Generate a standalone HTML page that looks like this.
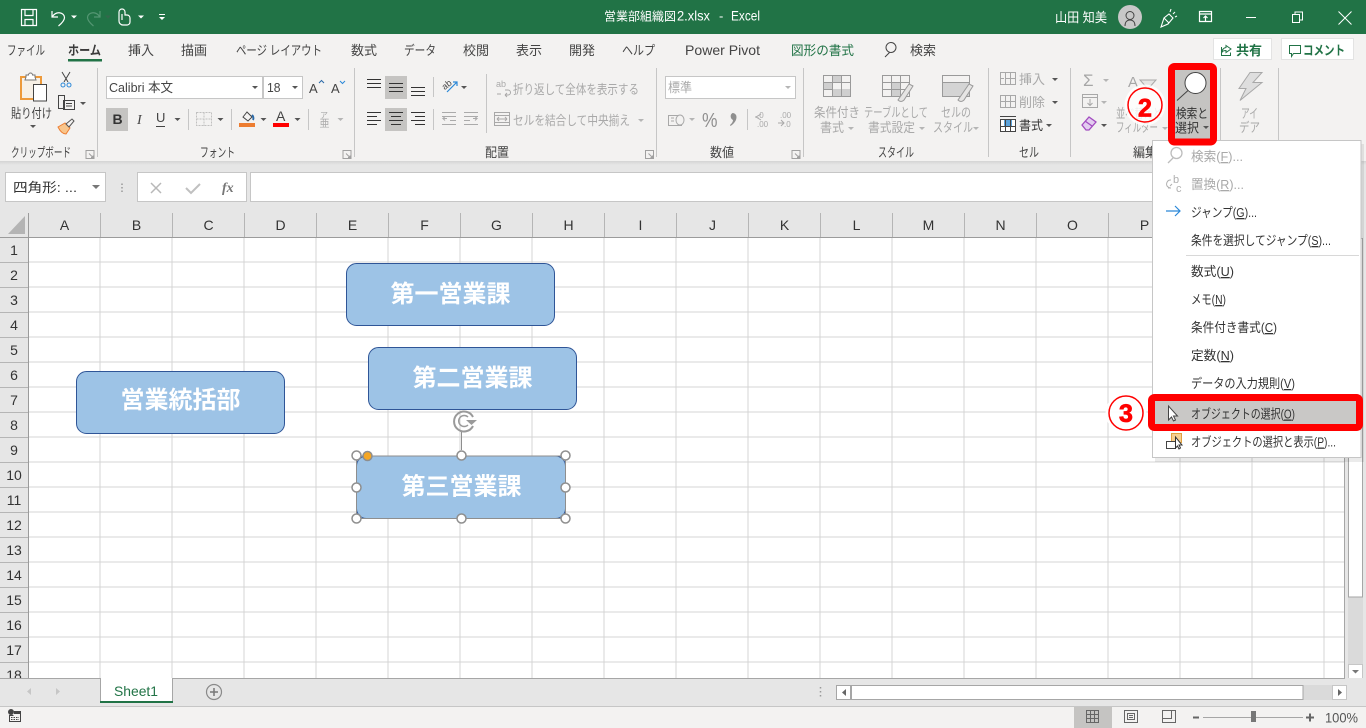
<!DOCTYPE html>
<html lang="ja"><head><meta charset="utf-8"><title>営業部組織図2.xlsx - Excel</title>
<style>
html,body{margin:0;padding:0;width:1366px;height:728px;overflow:hidden;background:#fff}
svg{position:absolute;left:0;top:0;display:block}
text{font-family:"Liberation Sans","Noto Sans CJK JP",sans-serif;font-size:13px;fill:#444}
.d{fill:#a9a9a9}.k{fill:#333}.w{fill:#fff}.g{fill:#217346}.b{font-weight:700}
.h{font-size:14px;fill:#333;text-anchor:middle}
.r{font-size:14px;fill:#333;text-anchor:middle}
.i{fill:none;stroke:#444;stroke-width:1}
.n{fill:none;stroke:#a8a8a8;stroke-width:1}
.s{font-size:24px;font-weight:700;fill:#fff;text-anchor:middle}
.m{fill:#333}.u{text-decoration:underline}
</style></head><body>
<svg width="1366" height="728" viewBox="0 0 1366 728" xmlns="http://www.w3.org/2000/svg">
<defs>
<path id="c" d="M0 0h6l-3 3z" fill="#555"/>
<path id="cd" d="M0 0h6l-3 3z" fill="#b5b5b5"/>
<path id="cw" d="M0 0h6l-3 3z" fill="#fff"/>
<path id="l" d="M0 0h8v8h-8zM3 3l4 4M7 5v2h-2" fill="none" stroke="#a0a0a0" stroke-width="1"/>
<linearGradient id="sh" x1="0" y1="0" x2="0" y2="1"><stop offset="0" stop-color="#d4d4d4"/><stop offset="1" stop-color="#e6e6e6"/></linearGradient>
<pattern id="grid" width="72" height="25" patternUnits="userSpaceOnUse" x="28.5" y="237.5">
<rect width="72" height="25" fill="#fff"/><path d="M71.5 0v25M0 24.5h72" stroke="#d4d4d4" stroke-width="1" fill="none"/>
</pattern>
</defs>

<!-- title bar -->
<rect width="1366" height="34" fill="#217346"/>
<g fill="none" stroke="#fff" stroke-width="1.2">
<path d="M21.5 9.5h15v16h-15zM25 9.5v6h8v-6M25 25.5v-6h8v6"/>
<path d="M52 11v6h6M52.5 16.5c4-6 12-4 12 1c0 3-3 6-6 8.5"/>
<g stroke="#5a9a78"><path d="M100 11v6h-6M99.5 16.5c-4-6-12-4-12 1c0 3 3 6 6 8.5" opacity=".9"/></g>
<path d="M119 17v-5a3 3 0 0 1 6 0v3h2a3 3 0 0 1 3 3v4a3 3 0 0 1-3 3h-4a4 4 0 0 1-4-4zM119 14h-.5M122 14v6"/>
<path d="M1199.5 11.5h12v10h-12zM1199.5 14h12M1205.5 21v-5M1203.5 18l2-2 2 2"/>
<path d="M1246 17.5h10M1292.5 14.5h7v8h-7zM1295 14.5v-2.500h7.500v8h-3M1338.500 11.500l13 13M1351.500 11.500l-13 13" stroke-width="1"/>
<path d="M1161 27l3-9 5-4 4 4-5 6zM1164 18l5 5M1170 12l1-3M1173 14l2-2M1175 17l2-1" stroke-width="1.100"/>
</g>
<use href="#cw" x="71" y="15.500"/><use href="#c" x="105" y="15.500" opacity=".4"/><use href="#cw" x="138" y="15.500"/>
<path d="M159 14h6v1h-6zM159 17h6l-3 3z" fill="#fff"/>
<text class="w" x="604" y="20.500" style="font-size:12px" textLength="72">営業部組織図</text>
<text class="w" x="677" y="20.500" textLength="33" lengthAdjust="spacingAndGlyphs" style="font-size:14px">2.xlsx</text>
<text class="w" x="719" y="20.500" style="font-size:13px">-</text>
<text class="w" x="731" y="20.500" textLength="29" lengthAdjust="spacingAndGlyphs" style="font-size:14px">Excel</text>
<text class="w" x="1055" y="22" textLength="52" lengthAdjust="spacingAndGlyphs">山田 知美</text>
<circle cx="1130" cy="17" r="12" fill="#c8c8c8"/>
<path d="M1125 26c0-4 2-6 5-6s5 2 5 6M1130 19.5a4 4 0 1 0 0-8a4 4 0 0 0 0 8z" fill="none" stroke="#444" stroke-width="1"/>

<!-- ribbon -->
<rect y="34" width="1366" height="127" fill="#f3f2f1"/>
<rect y="161" width="1366" height="4" fill="url(#sh)"/>
<text x="7" y="55" textLength="38" lengthAdjust="spacingAndGlyphs">ファイル</text>
<text x="68" y="55" class="b" textLength="33" lengthAdjust="spacingAndGlyphs" style="fill:#3a3a3a">ホーム</text>
<rect x="68" y="59" width="34" height="2.5" fill="#217346"/>
<text x="128" y="55" textLength="26">挿入</text>
<text x="181" y="55" textLength="26">描画</text>
<text x="236" y="55" textLength="86" lengthAdjust="spacingAndGlyphs">ページ レイアウト</text>
<text x="351" y="55" textLength="26">数式</text>
<text x="404" y="55" textLength="32" lengthAdjust="spacingAndGlyphs">データ</text>
<text x="463" y="55" textLength="26">校閲</text>
<text x="516" y="55" textLength="26">表示</text>
<text x="569" y="55" textLength="26">開発</text>
<text x="622" y="55" textLength="33" lengthAdjust="spacingAndGlyphs">ヘルプ</text>
<text x="685" y="55" textLength="75" lengthAdjust="spacingAndGlyphs" style="font-size:14px">Power Pivot</text>
<text x="791" y="55" class="g" textLength="63" lengthAdjust="spacingAndGlyphs">図形の書式</text>
<path d="M885 57l5-5M896 47.500a5 5 0 1 1-10 0a5 5 0 0 1 10 0z" transform="translate(0 0)" class="i"/>
<text x="910" y="55" textLength="26">検索</text>

<rect x="1213.5" y="38.500" width="58" height="21" fill="#fff" stroke="#e3e3e3"/>
<path d="M1222 47.500h-.5v8h9v-3M1226 45.500l5 3.500-5 3.500v-2c-2 0-3.500 .5-4 2c0-3 1.500-4.500 4-5z" fill="none" stroke="#217346"/>
<text x="1236" y="55" class="g b" textLength="26">共有</text>
<rect x="1281.5" y="38.500" width="72" height="21" fill="#fff" stroke="#e3e3e3"/>
<path d="M1289.5 45.500h11v8h-7l-2 3v-3h-2z" fill="none" stroke="#217346"/>
<text x="1303" y="55" class="g b" textLength="42" lengthAdjust="spacingAndGlyphs">コメント</text>

<g stroke="#c6c6c6" stroke-width="1"><path d="M97.5 68v89M354.5 68v89M656.5 68v89M803.5 68v89M988.5 68v89M1070.5 68v89M1220.5 68v89M1278.5 68v89"/></g>
<text x="11" y="157" textLength="60" lengthAdjust="spacingAndGlyphs">クリップボード</text>
<text x="200" y="157" textLength="35" lengthAdjust="spacingAndGlyphs">フォント</text>
<text x="485" y="157" textLength="24" lengthAdjust="spacingAndGlyphs">配置</text>
<text x="710" y="157" textLength="24" lengthAdjust="spacingAndGlyphs">数値</text>
<text x="878" y="157" textLength="36" lengthAdjust="spacingAndGlyphs">スタイル</text>
<text x="1019" y="157" textLength="20" lengthAdjust="spacingAndGlyphs">セル</text>
<text x="1133" y="157" textLength="24" lengthAdjust="spacingAndGlyphs">編集</text>
<use href="#l" x="86" y="150.500"/><use href="#l" x="343" y="150.500"/><use href="#l" x="645.500" y="150.500"/><use href="#l" x="792" y="150.500"/>

<!-- clipboard -->
<rect x="21" y="77" width="20" height="22" fill="#f7f0e6" stroke="#ed9a3b" stroke-width="2"/>
<path d="M26 77v-2h2.500a2 2 0 0 1 4 0h2.500v2l1 3h-11z" fill="#fff" stroke="#777"/>
<rect x="33.5" y="84.500" width="13" height="16.500" fill="#fff" stroke="#444"/>
<text x="11" y="118" textLength="41" lengthAdjust="spacingAndGlyphs">貼り付け</text>
<use href="#c" x="30" y="125"/>
<path d="M62 72l6 10M70 72l-6 10" stroke="#444" fill="none"/><circle cx="63" cy="85" r="2" fill="none" stroke="#2b88d8"/><circle cx="69" cy="85" r="2" fill="none" stroke="#2b88d8"/>
<path d="M58.5 95.500h6v13h-6zM63.500 100.500h11v9h-11z" fill="#f3f2f1" stroke="#444"/><path d="M66 103.500h6M66 106h6" stroke="#444"/>
<use href="#c" x="80" y="102"/>
<path d="M58 127l7-4 5 5-4 6c-3 0-6-3-8-7z" fill="#f9c58b" stroke="#ed7d31"/><path d="M66 124l6-5 2 2-5 6z" fill="#f3f2f1" stroke="#555"/>

<!-- font -->
<rect x="106.5" y="76.500" width="156" height="22" fill="#fff" stroke="#c6c6c6"/>
<rect x="263.5" y="76.500" width="39" height="22" fill="#fff" stroke="#c6c6c6"/>
<text x="109" y="92" textLength="64" lengthAdjust="spacingAndGlyphs">Calibri 本文</text>
<text x="267" y="92" textLength="13.500" lengthAdjust="spacingAndGlyphs">18</text>
<use href="#c" x="252" y="86"/><use href="#c" x="292" y="86"/>
<text x="309" y="93" style="font-size:13px">A</text><path d="M319 83l2.500-2.500 2.500 2.500" fill="none" stroke="#2b6aa8"/>
<text x="331" y="93" style="font-size:13px">A</text><path d="M340 81l2.500 2.500 2.500-2.500" fill="none" stroke="#2b88d8"/>
<rect x="106" y="108" width="22" height="23" fill="#c5c4c2"/>
<text x="112.5" y="124" class="b" style="font-size:14px;fill:#333">B</text>
<text x="137" y="124" style="font-size:14px;font-style:italic;font-family:'Liberation Serif',serif">I</text>
<text x="156" y="122" style="font-size:13px">U</text><path d="M156 126.500h9" stroke="#444"/>
<use href="#c" x="174.500" y="118"/>
<path d="M188.5 109v21M231.500 109v21M308.500 109v21" stroke="#c6c6c6"/>
<path d="M196.5 112.500h15v13h-15zM204 112.500v13M196.500 119h15" fill="none" stroke="#c0c0c0" stroke-dasharray="2 1"/>
<use href="#c" x="217.500" y="118"/>
<path d="M243 117l4-5 5 5-4 4z" fill="none" stroke="#444"/><path d="M252 115c1 1 2 3 1 5" stroke="#2b6aa8" stroke-width="2" fill="none"/>
<rect x="239" y="123" width="16" height="4" fill="#ed7d31"/><use href="#c" x="260.500" y="118"/>
<text x="276" y="121" style="font-size:14px">A</text><rect x="273" y="123" width="16" height="4" fill="#f00"/><use href="#c" x="294.500" y="118"/>
<text x="320" y="118" style="font-size:8px;fill:#aaa">ア</text><text x="319.5" y="127" style="font-size:10px;fill:#aaa">亜</text><use href="#cd" x="337.500" y="118"/>

<!-- alignment -->
<rect x="385" y="76" width="22" height="23" fill="#c5c4c2"/><rect x="385" y="108" width="22" height="23" fill="#c5c4c2"/>
<g stroke="#333" fill="none">
<path d="M367 79.500h14M367 83.500h14M367 87.500h14"/>
<path d="M389 83.500h14M389 87.500h14M389 91.500h14"/>
<path d="M411 87.500h14M411 91.500h14M411 95.500h14"/>
<path d="M367 112.500h14M367 116.500h10M367 120.500h14M367 124.500h10"/>
<path d="M389 112.500h14M391 116.500h10M389 120.500h14M391 124.500h10"/>
<path d="M411 112.500h14M415 116.500h10M411 120.500h14M415 124.500h10"/>
</g>
<path d="M433.5 77v20M433.500 109v21M486.500 74v59" stroke="#c6c6c6"/>
<path d="M447 92l10-10M453 82h4v4" fill="none" stroke="#2b88d8" stroke-width="1.200"/><text x="441" y="88" transform="rotate(-40 446 84)" style="font-size:9px">ab</text>
<use href="#c" x="461" y="86"/>
<path d="M442 116.500h14M450 120.500h6M442 124.500h14M442 112.500h14M447 118.500h-4l2-2M443 118.500l2 2" stroke="#aaa" fill="none"/>
<path d="M464 116.500h14M464 120.500h6M464 124.500h14M464 112.500h14M473 118.500h4l-2-2M477 118.500l-2 2" stroke="#aaa" fill="none"/>
<text x="496" y="87" style="font-size:9px;fill:#aaa">ab</text><path d="M505 90h3a2 2 0 0 1 0 5h-3M505 95l2-2M505 95l2 2M497 94h4" class="n"/>
<text x="513" y="94" class="d" textLength="126" lengthAdjust="spacingAndGlyphs">折り返して全体を表示する</text>
<path d="M494.5 112.500h15v13h-15zM494.500 115.500h15M494.500 122.500h15M497 119h10M497 119l2-2M497 119l2 2M507 119l-2-2M507 119l-2 2" class="n"/>
<text x="513" y="125" class="d" textLength="117" lengthAdjust="spacingAndGlyphs">セルを結合して中央揃え</text>
<use href="#cd" x="638" y="119"/>

<!-- number -->
<rect x="665.5" y="76.500" width="130" height="22" fill="#fff" stroke="#c6c6c6"/>
<text x="668" y="92" class="d" textLength="24" lengthAdjust="spacingAndGlyphs">標準</text><use href="#cd" x="785" y="86"/>
<path d="M668.5 115.500h13v10h-13zM671 118h3M671 121h3" class="n"/><ellipse cx="680" cy="120" rx="4" ry="5" fill="#f3f2f1" stroke="#a8a8a8"/>
<use href="#cd" x="689" y="118"/>
<text x="702" y="127" textLength="15.500" lengthAdjust="spacingAndGlyphs" style="font-size:20px;fill:#8f8f8f">%</text>
<path d="M732.5 113a4 4 0 0 1 4 4c0 4-3 7-6 9l-.5-1c2-1.500 3-3.500 3-5a4 4 0 0 1-.5-7z" fill="#8f8f8f"/>
<path d="M747.5 109v21" stroke="#c6c6c6"/>
<text x="757" y="118" style="font-size:8px;fill:#aaa">.0</text><text x="757" y="127" style="font-size:8px;fill:#aaa">.00</text><path d="M756 117h-1M761 114l-5 3 5 3" class="n"/>
<text x="780" y="118" style="font-size:8px;fill:#aaa">.00</text><text x="784" y="127" style="font-size:8px;fill:#aaa">.0</text><path d="M778 123h6M781 120l3 3-3 3" class="n"/>

<!-- styles -->
<g fill="none" stroke="#9a9a9a">
<path d="M823.5 75.500h27v21h-27zM823.500 82.500h27M823.500 89.500h27M832.500 75.500v21M841.500 75.500v21"/>
<path d="M882.5 75.500h27v21h-27zM882.500 82.500h27M882.500 89.500h27M891.500 75.500v21M900.500 75.500v21"/>
<path d="M942.5 75.500h27v21h-27zM942.500 82.500h27"/>
</g>
<path d="M833 76h8v6h-8zM824 83h8v6h-8zM842 89h8v7h-8zM833 89h8v7h-8z" fill="#cfcfcf"/>
<path d="M892 83h8v6h-8zM892 90h8v6h-8z" fill="#cfcfcf"/><rect x="943" y="83" width="26" height="13" fill="#d4d4d4"/>
<path d="M898 100l11-16 4 2-9 14c-2 2-4 2-6 0z" fill="#e6e5e4" stroke="#9a9a9a"/>
<path d="M958 100l11-16 4 2-9 14c-2 2-4 2-6 0z" fill="#e6e5e4" stroke="#9a9a9a"/>
<text x="814" y="117" class="d" textLength="46" lengthAdjust="spacingAndGlyphs">条件付き</text>
<text x="820" y="132" class="d" textLength="24" lengthAdjust="spacingAndGlyphs">書式</text><use href="#cd" x="848" y="127"/>
<text x="864" y="117" class="d" textLength="64" lengthAdjust="spacingAndGlyphs">テーブルとして</text>
<text x="868" y="132" class="d" textLength="47" lengthAdjust="spacingAndGlyphs">書式設定</text><use href="#cd" x="919" y="127"/>
<text x="941" y="117" class="d" textLength="30" lengthAdjust="spacingAndGlyphs">セルの</text>
<text x="933" y="132" class="d" textLength="40" lengthAdjust="spacingAndGlyphs">スタイル</text><use href="#cd" x="973" y="127"/>

<!-- cells -->
<path d="M1000.5 72.500h15v12h-15zM1005.500 72.500v12M1010.500 72.500v12M1005.500 78.500h10M1000 78.500h4" class="n"/>
<text x="1019" y="84" class="d" textLength="26">挿入</text><use href="#c" x="1052" y="78"/>
<path d="M1000.5 95.500h15v12h-15zM1005.500 95.500v12M1010.500 95.500v12M1000.500 101.500h15" class="n"/>
<text x="1019" y="107" class="d" textLength="26">削除</text><use href="#c" x="1052" y="101"/>
<rect x="1000.5" y="119.500" width="15" height="12" fill="#fff" stroke="#444"/><rect x="1004" y="120" width="8" height="6" fill="#5ba3dc"/><path d="M1000 116.500h16M1005.500 119v13M1010.500 119v13M1000.500 126.500h15" fill="none" stroke="#444"/>
<text x="1019" y="130" class="k" textLength="24" lengthAdjust="spacingAndGlyphs">書式</text><use href="#c" x="1046" y="124"/>

<!-- editing -->
<text x="1083" y="86" style="font-size:17px;fill:#a6a6a6">Σ</text><use href="#cd" x="1103" y="79"/>
<path d="M1082.5 94.500h15v13h-15zM1082.500 97.500h15M1090 99v6M1087.500 103l2.500 2.500 2.500-2.500" class="n"/><use href="#cd" x="1101" y="101"/>
<path d="M1082 125l7-8 7 5-7 8h-3z" fill="#e3cdf0" stroke="#a24cc0" stroke-width="1.300"/><path d="M1085 121l7 5" stroke="#a24cc0" stroke-width="1.300"/><use href="#c" x="1101" y="124"/>
<text x="1128" y="87" style="font-size:15px;fill:#a6a6a6">A</text><path d="M1140 80h16l-8 9z" fill="#e6e5e4" stroke="#a8a8a8"/>
<text x="1116" y="118" class="d" textLength="46" lengthAdjust="spacingAndGlyphs">並べ替えと</text>
<text x="1116" y="132" class="d" textLength="42" lengthAdjust="spacingAndGlyphs">フィルター</text><use href="#cd" x="1162" y="127"/>

<!-- idea -->
<path d="M1250 72.500l-11 16h7l-6 12 22-18h-9l9-10z" fill="#dedede" stroke="#a8a8a8"/>
<text x="1241" y="118" class="d" textLength="17" lengthAdjust="spacingAndGlyphs">アイ</text>
<text x="1239" y="132" class="d" textLength="21" lengthAdjust="spacingAndGlyphs">デア</text>

<!-- formula bar -->
<rect y="165" width="1366" height="48" fill="#e6e6e6"/>
<rect x="5.5" y="172.500" width="100" height="29" fill="#fff" stroke="#c6c6c6"/>
<text x="13" y="192" class="k" textLength="64" lengthAdjust="spacingAndGlyphs">四角形: ...</text>
<path d="M92 185h8l-4 4z" fill="#777"/>
<path d="M122 183.500v1.500M122 187v1.500M122 190.500v1.500" stroke="#999" stroke-width="1.500"/>
<rect x="137.5" y="172.500" width="109" height="29" fill="#fff" stroke="#c6c6c6"/>
<path d="M151 183l10 10M161 183l-10 10" stroke="#b8b8b8" stroke-width="1.500"/>
<path d="M186 188l5 5 9-9" fill="none" stroke="#c0c0c0" stroke-width="2"/>
<text x="222" y="192" style="font-size:14px;font-style:italic;font-weight:700;font-family:'Liberation Serif',serif;fill:#777">fx</text>
<rect x="250.5" y="172.500" width="1095" height="29" fill="#fff" stroke="#c6c6c6"/>

<!-- headers -->
<rect y="213" width="1345" height="25" fill="#e6e6e6"/>
<rect y="238" width="29" height="441" fill="#e6e6e6"/>
<path d="M25 216v18h-17z" fill="#b4b4b4"/>
<rect x="29" y="238" width="1316" height="441" fill="url(#grid)"/>
<g stroke="#b5b5b5"><path d="M100.5 213v24M172.500 213v24M244.500 213v24M316.500 213v24M388.500 213v24M460.500 213v24M532.500 213v24M604.500 213v24M676.500 213v24M748.500 213v24M820.500 213v24M892.500 213v24M964.500 213v24M1036.500 213v24M1108.500 213v24M1180.500 213v24M1252.500 213v24M1324.500 213v24"/>
<path d="M0 262.5h28M0 287.5h28M0 312.5h28M0 337.5h28M0 362.5h28M0 387.5h28M0 412.5h28M0 437.5h28M0 462.5h28M0 487.5h28M0 512.5h28M0 537.5h28M0 562.5h28M0 587.5h28M0 612.5h28M0 637.5h28M0 662.5h28"/></g>
<path d="M0 237.5h1345M28.500 213v466" stroke="#9b9b9b"/>
<path d="M1344.5 213v466" stroke="#a6a6a6"/>
<text class="h" x="64.5" y="230">A</text><text class="h" x="136.5" y="230">B</text><text class="h" x="208.5" y="230">C</text><text class="h" x="280.5" y="230">D</text><text class="h" x="352.5" y="230">E</text><text class="h" x="424.5" y="230">F</text><text class="h" x="496.5" y="230">G</text><text class="h" x="568.5" y="230">H</text><text class="h" x="640.5" y="230">I</text><text class="h" x="712.5" y="230">J</text><text class="h" x="784.5" y="230">K</text><text class="h" x="856.5" y="230">L</text><text class="h" x="928.5" y="230">M</text><text class="h" x="1000.5" y="230">N</text><text class="h" x="1072.5" y="230">O</text><text class="h" x="1144.5" y="230">P</text>
<text class="r" x="14" y="255">1</text><text class="r" x="14" y="280">2</text><text class="r" x="14" y="305">3</text><text class="r" x="14" y="330">4</text><text class="r" x="14" y="355">5</text><text class="r" x="14" y="380">6</text><text class="r" x="14" y="405">7</text><text class="r" x="14" y="430">8</text><text class="r" x="14" y="455">9</text><text class="r" x="14" y="480">10</text><text class="r" x="14" y="505">11</text><text class="r" x="14" y="530">12</text><text class="r" x="14" y="555">13</text><text class="r" x="14" y="580">14</text><text class="r" x="14" y="605">15</text><text class="r" x="14" y="630">16</text><text class="r" x="14" y="655">17</text>
<svg x="0" y="660" width="28" height="18"><text class="r" x="14" y="20">18</text></svg>

<!-- shapes -->
<g fill="#9dc3e6" stroke="#2f5597" stroke-width="1">
<rect x="346.5" y="263.5" width="208" height="62" rx="10"/>
<rect x="368.5" y="347.5" width="208" height="62" rx="10"/>
<rect x="76.5" y="371.5" width="208" height="62" rx="10"/>
<rect x="356.5" y="456" width="209" height="62.5" rx="10"/>
</g>
<text class="s" x="450.5" y="302">第一営業課</text>
<text class="s" x="472.5" y="386">第二営業課</text>
<text class="s" x="180.5" y="408">営業統括部</text>
<text class="s" x="461.5" y="494.5">第三営業課</text>
<rect x="356.5" y="456" width="209" height="62.5" fill="none" stroke="#8e8e8e"/>
<path d="M461.5 431v19" stroke="#8e8e8e"/>
<path d="M473 417a10 10 0 1 0 0 9" fill="none" stroke="#9a9a9a" stroke-width="2"/><path d="M468 417a5.500 5.500 0 1 0 0 8" fill="none" stroke="#9a9a9a" stroke-width="1.500"/><path d="M466 420h11l-5.500 5z" fill="#9a9a9a"/>
<g fill="#fff" stroke="#8e8e8e" stroke-width="1.500">
<circle cx="356.5" cy="455.5" r="4.5"/><circle cx="461.5" cy="455.5" r="4.5"/><circle cx="565.5" cy="455.5" r="4.5"/>
<circle cx="356.5" cy="487.5" r="4.5"/><circle cx="565.5" cy="487.5" r="4.5"/>
<circle cx="356.5" cy="518.5" r="4.5"/><circle cx="461.5" cy="518.5" r="4.5"/><circle cx="565.5" cy="518.5" r="4.5"/>
<circle cx="367.5" cy="456" r="4.5" fill="#f5a623"/>
</g>

<!-- scroll bars -->
<rect x="1345" y="213" width="21" height="466" fill="#e6e6e6"/>
<rect x="1348" y="238" width="15" height="426" fill="#dadada"/>
<rect x="1348.5" y="238.5" width="14" height="358.5" fill="#fff" stroke="#a6a6a6"/>
<rect x="1348.5" y="664.5" width="14" height="14" fill="#fff" stroke="#c6c6c6"/><path d="M1352 670h7l-3.500 3.500z" fill="#777"/>
<rect y="678" width="1366" height="28" fill="#e6e6e6"/>
<path d="M0 678.5h100M172 678.5h1173" stroke="#a6a6a6"/>
<path d="M100.5 678v24M172.5 678v24" stroke="#a6a6a6"/>
<rect x="101" y="678" width="71" height="24" fill="#fff"/>
<rect x="100" y="701" width="73" height="2" fill="#217346"/>
<text x="114" y="696" class="g" style="font-size:14px" textLength="44" lengthAdjust="spacingAndGlyphs">Sheet1</text>
<path d="M31 688v7l-4-3.500zM56 688v7l4-3.500z" fill="#c6c6c6"/>
<circle cx="214" cy="692" r="7.500" fill="none" stroke="#8a8a8a" stroke-width="1.200"/><path d="M210 692h8M214 688v8" stroke="#777" stroke-width="1.500"/>
<path d="M820.5 687v1.500M820.500 691v1.500M820.500 695v1.500" stroke="#999" stroke-width="1.500"/>
<rect x="836.5" y="685.500" width="14" height="14" fill="#fff" stroke="#a6a6a6"/><path d="M846 689v7l-4-3.500z" fill="#666"/>
<rect x="851" y="685" width="482" height="15" fill="#dadada"/>
<rect x="851.5" y="685.500" width="451.500" height="14" fill="#fff" stroke="#a6a6a6"/>
<rect x="1332.5" y="685.500" width="14" height="14" fill="#fff" stroke="#c6c6c6"/><path d="M1338 689v7l4-3.500z" fill="#666"/>

<!-- status bar -->
<rect y="706" width="1366" height="22" fill="#f3f2f1"/><path d="M0 706.5h1366" stroke="#c6c6c6"/>
<circle cx="11" cy="712" r="3" fill="#444"/><path d="M14 711.5h6.500v10h-11v-6h4" fill="#f3f2f1" stroke="#444"/><path d="M11 717.5h8M11 719.500h8" stroke="#444" stroke-dasharray="1.500 1"/><path d="M14 711h7v3h-7z" fill="#444"/>
<rect x="1074" y="707" width="38" height="21" fill="#c5c4c2"/>
<g fill="none" stroke="#666"><path d="M1086.5 710.500h12v12h-12zM1086.500 714.500h12M1086.500 718.500h12M1090.500 710.500v12M1094.500 710.500v12"/>
<path d="M1124.5 710.500h13v12h-13zM1127.500 713.500h7v6h-7zM1129 715.500h4M1129 717.500h4"/>
<path d="M1162.5 710.500h13v12h-13zM1162.500 718.500h9v-8"/></g>
<rect x="1193" y="716.5" width="6" height="2" fill="#666"/>
<rect x="1203" y="717" width="100" height="1" fill="#a6a6a6"/>
<rect x="1251" y="711" width="5" height="11" fill="#777"/>
<path d="M1306 717.5h8M1310 713.500v8" stroke="#666" stroke-width="2"/>
<text x="1325" y="722.5" style="font-size:14px;fill:#555" textLength="33" lengthAdjust="spacingAndGlyphs">100%</text>

<!-- context menu -->
<rect x="1155" y="144" width="209" height="318" fill="#000" opacity=".08"/>
<rect x="1152.5" y="140.5" width="208.5" height="317" fill="#fff" stroke="#c6c6c6"/>
<path d="M1186 255.5h173" stroke="#d8d8d8"/>
<path d="M1168 163l5-5M1182 153a5.500 5.500 0 1 1-11 0a5.500 5.500 0 0 1 11 0z" fill="none" stroke="#bdbdbd" stroke-width="1.300"/>
<text x="1173" y="183" style="font-size:11px;fill:#b0b0b0">b</text><text x="1176" y="192" style="font-size:11px;fill:#b0b0b0">c</text>
<path d="M1171 180a4 4 0 0 0-3 7l2 1M1168 188h3M1172 184l-2 2" fill="none" stroke="#b0b0b0"/>
<path d="M1166 211h14M1175 206l5 5-5 5" fill="none" stroke="#2b88d8" stroke-width="1.200"/>
<text x="1191" y="161" class="d" textLength="52" lengthAdjust="spacingAndGlyphs">検索(<tspan class="u">F</tspan>)...</text>
<text x="1191" y="189" class="d" textLength="53" lengthAdjust="spacingAndGlyphs">置換(<tspan class="u">R</tspan>)...</text>
<text x="1191" y="217" class="m" textLength="66" lengthAdjust="spacingAndGlyphs">ジャンプ(<tspan class="u">G</tspan>)...</text>
<text x="1191" y="245" class="m" textLength="140" lengthAdjust="spacingAndGlyphs">条件を選択してジャンプ(<tspan class="u">S</tspan>)...</text>
<text x="1191" y="276" class="m" textLength="43" lengthAdjust="spacingAndGlyphs">数式(<tspan class="u">U</tspan>)</text>
<text x="1191" y="304" class="m" textLength="35" lengthAdjust="spacingAndGlyphs">メモ(<tspan class="u">N</tspan>)</text>
<text x="1191" y="332" class="m" textLength="86" lengthAdjust="spacingAndGlyphs">条件付き書式(<tspan class="u">C</tspan>)</text>
<text x="1191" y="360" class="m" textLength="43" lengthAdjust="spacingAndGlyphs">定数(<tspan class="u">N</tspan>)</text>
<text x="1191" y="388" class="m" textLength="104" lengthAdjust="spacingAndGlyphs">データの入力規則(<tspan class="u">V</tspan>)</text>
<rect x="1152" y="396" width="209" height="33" fill="#c9c8c6"/>
<path d="M1168.5 406v14l3-3 2 4 2-1-2-4h4z" fill="#fff" stroke="#444"/>
<text x="1191" y="418.5" class="m" textLength="104" lengthAdjust="spacingAndGlyphs">オブジェクトの選択(<tspan class="u">O</tspan>)</text>
<rect x="1171.5" y="433.5" width="10" height="9" fill="#f6cf8f" stroke="#e0a040"/>
<rect x="1166.5" y="441.5" width="9" height="7" fill="#fff" stroke="#444"/>
<path d="M1175.5 437v11l2-2 1.500 3 1.500-1-1.500-3h3z" fill="#fff" stroke="#333"/>
<text x="1191" y="446.5" class="m" textLength="145" lengthAdjust="spacingAndGlyphs">オブジェクトの選択と表示(<tspan class="u">P</tspan>)...</text>

<!-- find & select button highlight -->
<rect x="1171.5" y="66.5" width="42" height="75.5" rx="3" fill="#c5c4c2" stroke="#f00" stroke-width="7"/>
<circle cx="1195.5" cy="83" r="10.5" fill="#fff" stroke="#444" stroke-width="1"/>
<path d="M1177 100.5l11-10" stroke="#444"/>
<text x="1176" y="118" class="k" textLength="32" lengthAdjust="spacingAndGlyphs">検索と</text>
<text x="1175" y="132.5" class="k" textLength="24" lengthAdjust="spacingAndGlyphs">選択</text><use href="#c" x="1203" y="126"/>

<!-- object select highlight -->
<rect x="1151.5" y="397.5" width="208" height="30" rx="3" fill="none" stroke="#f00" stroke-width="7"/>

<!-- step badges -->
<circle cx="1145" cy="105" r="20.5" fill="#fff" opacity=".8"/>
<circle cx="1145" cy="105" r="17" fill="none" stroke="#f00" stroke-width="1.500"/>
<text x="1145" y="116.5" text-anchor="middle" style="font-size:25px;font-weight:700;fill:#f00;stroke:#f00;stroke-width:.8">2</text>
<circle cx="1126" cy="413" r="20.5" fill="#fff" opacity=".9"/>
<circle cx="1126" cy="413" r="17" fill="none" stroke="#f00" stroke-width="1.500"/>
<text x="1126" y="422" text-anchor="middle" style="font-size:25px;font-weight:700;fill:#f00;stroke:#f00;stroke-width:.8">3</text>
</svg>
</body></html>
